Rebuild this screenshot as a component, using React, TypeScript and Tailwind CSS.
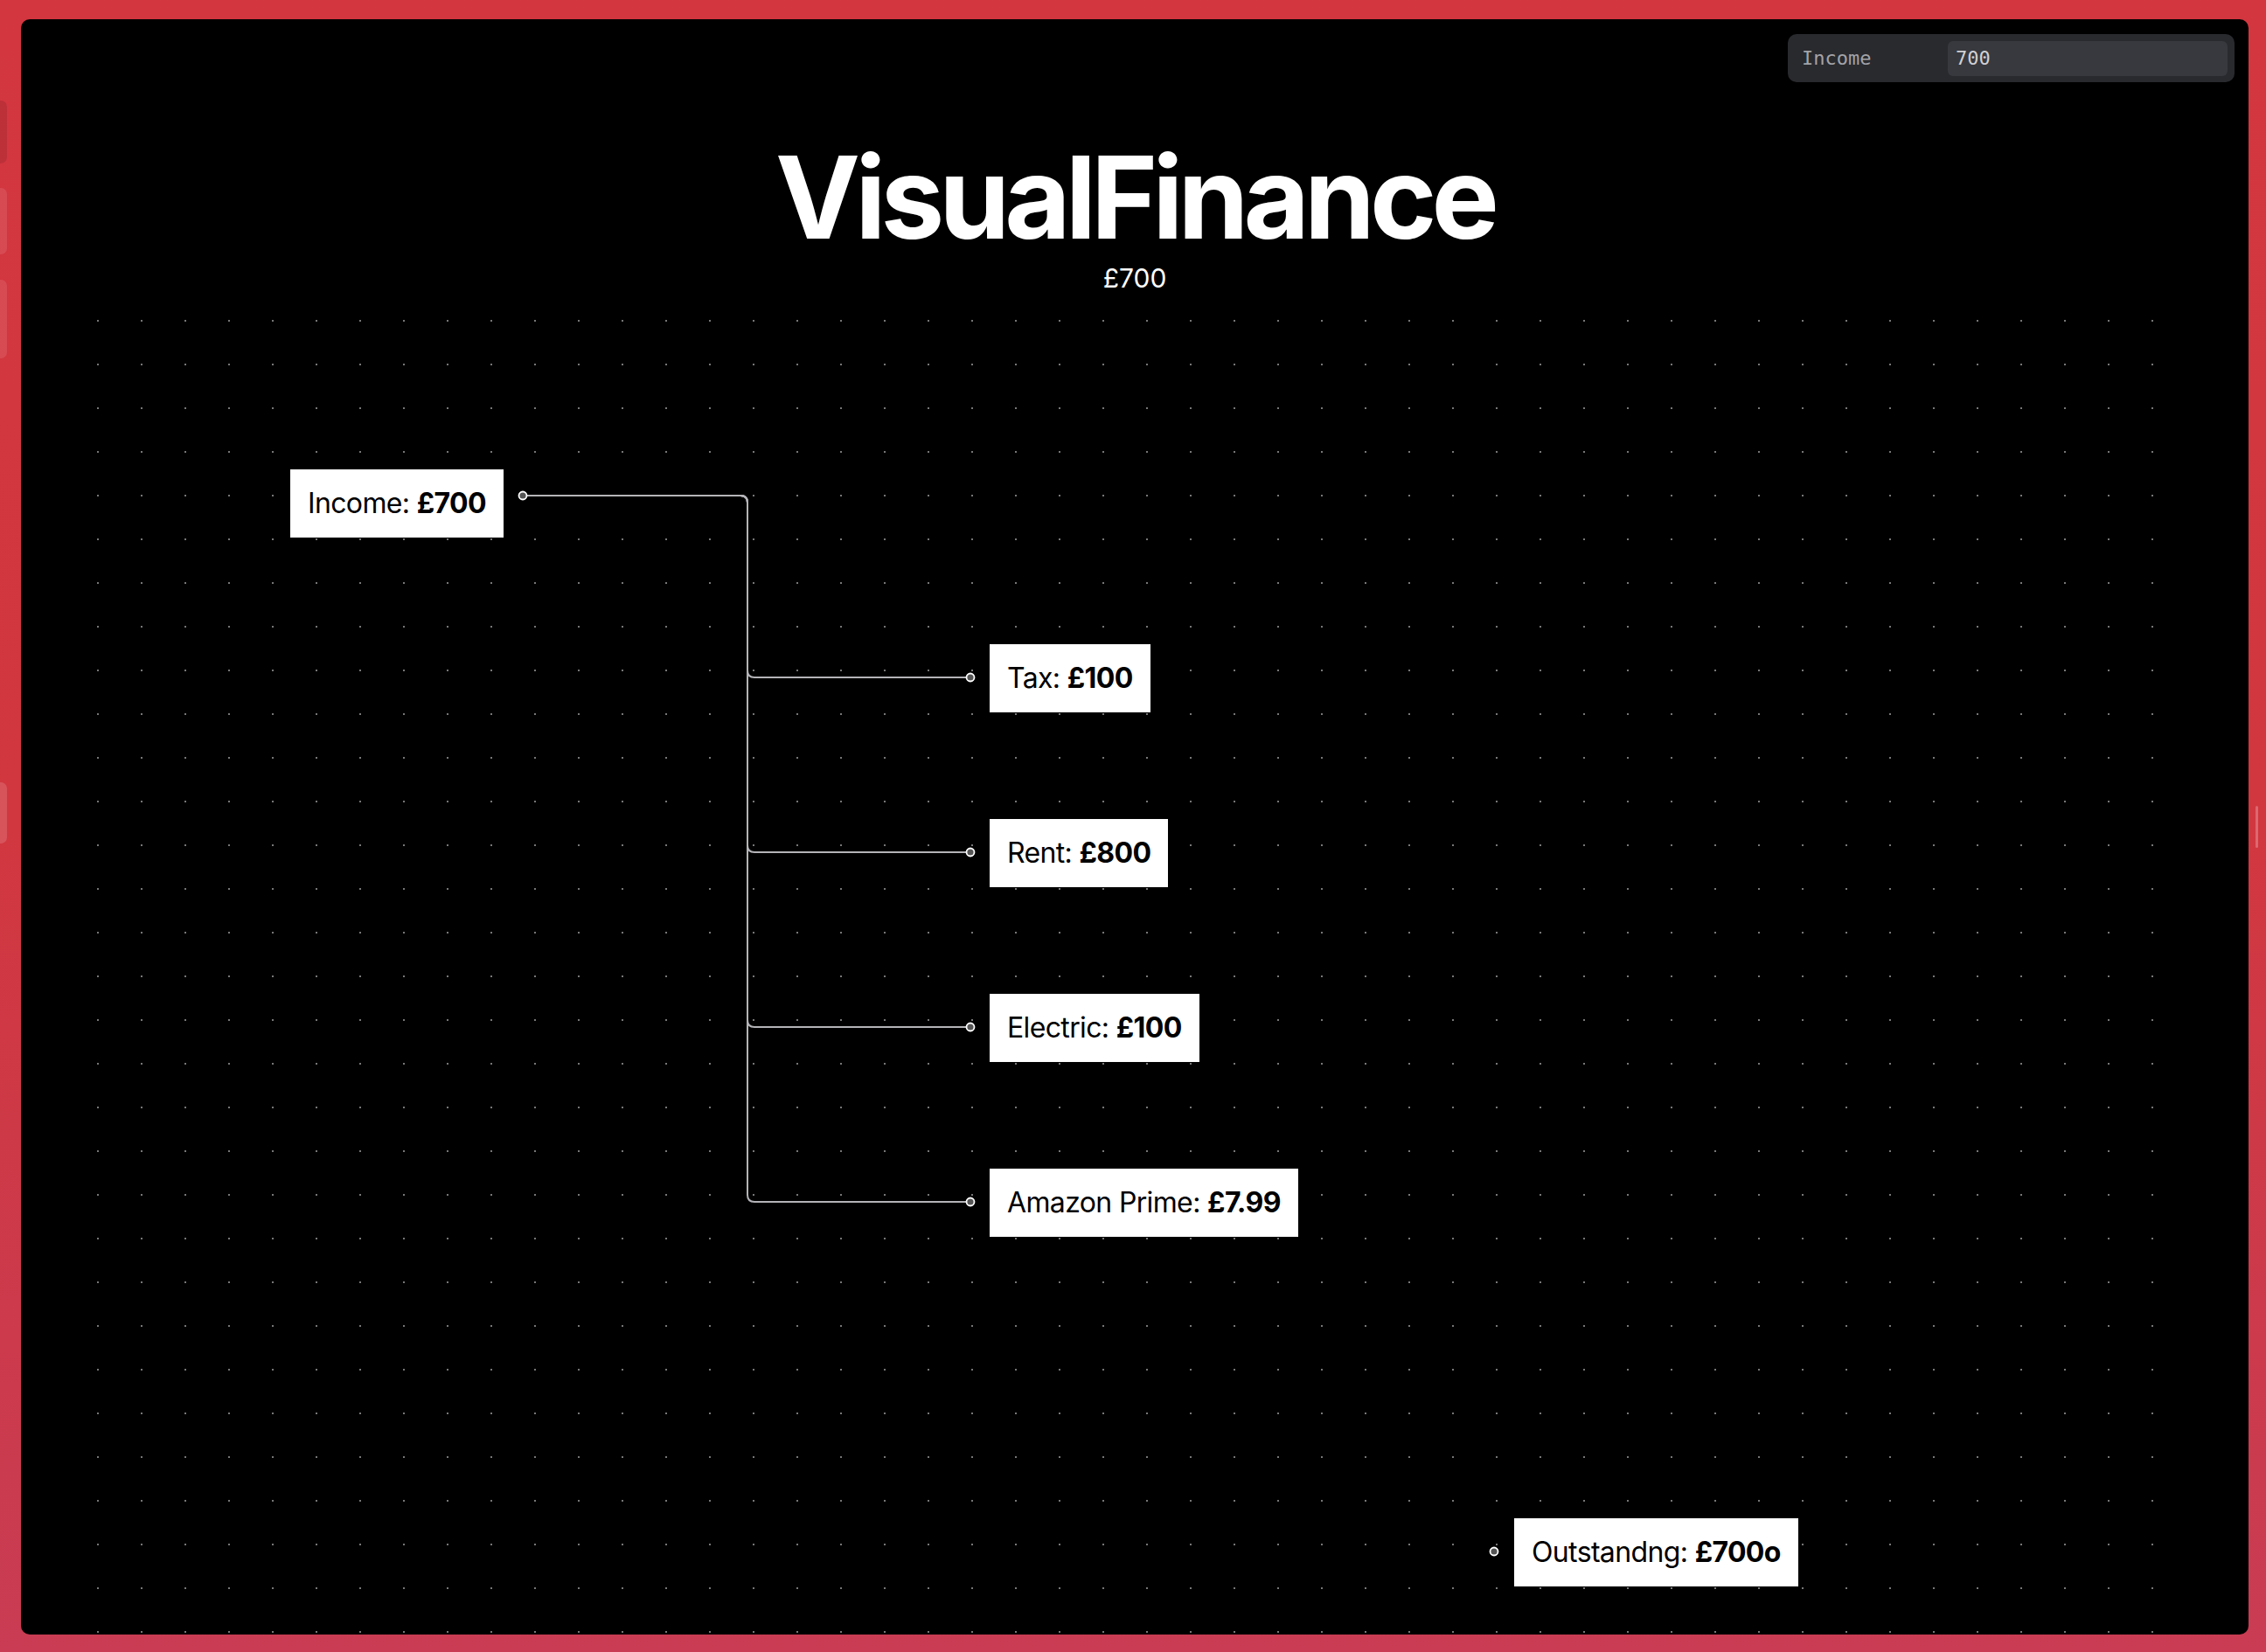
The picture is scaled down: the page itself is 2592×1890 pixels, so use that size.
// App.tsx
// VisualFinance — flow canvas of income and outgoings on a dotted board.
import React from "react";

type Item = { label: string; amount: string; top: number };

const outgoings: Item[] = [
  { label: "Tax", amount: "£100", top: 715 },
  { label: "Rent", amount: "£800", top: 915 },
  { label: "Electric", amount: "£100", top: 1115 },
  { label: "Amazon Prime", amount: "£7.99", top: 1315 },
];

// edge geometry (px, relative to the black board)
const SRC = { x: 574, y: 545 };
const BUS_X = 831;
const TARGET_X = 1086;
const R = 8;

function edgePath(ty: number) {
  return [
    `M${SRC.x},${SRC.y}`,
    `L${BUS_X - R},${SRC.y}`,
    `Q${BUS_X},${SRC.y} ${BUS_X},${SRC.y + R}`,
    `L${BUS_X},${ty - R}`,
    `Q${BUS_X},${ty} ${BUS_X + R},${ty}`,
    `L${TARGET_X},${ty}`,
  ].join(" ");
}

function Handle({ x, y }: { x: number; y: number }) {
  return <circle cx={x} cy={y} r={4.5} fill="#555" stroke="#fff" strokeWidth={1.8} />;
}

function Node({ label, amount, left, top }: { label: string; amount: string; left: number; top: number }) {
  return (
    <div
      className="absolute bg-white px-5 py-5 text-[32px] leading-[38px] tracking-[-0.02em] text-black whitespace-nowrap"
      style={{ left, top, fontFamily: "Inter, 'Noto Sans', sans-serif" }}
    >
      {label}: <span className="font-bold">{amount}</span>
    </div>
  );
}

export default function App() {
  return (
    <div className="relative w-[2592px] h-[1890px] overflow-hidden bg-linear-to-b from-[#d3363f] via-[#d1373f] to-[#c93c53] pt-[22px] pl-[24px] pr-[20px] pb-[20px] flex">
      {/* faint browser-chrome pills on the red frame */}
      <div className="absolute left-[-6px] top-[115px] w-[14px] h-[72px] rounded-full bg-black/10" />
      <div className="absolute left-[-6px] top-[215px] w-[14px] h-[76px] rounded-full bg-white/10" />
      <div className="absolute left-[-6px] top-[320px] w-[14px] h-[90px] rounded-full bg-white/10" />
      <div className="absolute left-[-6px] top-[895px] w-[14px] h-[70px] rounded-full bg-white/15" />
      <div className="absolute left-[2580px] top-[922px] w-[3px] h-[48px] rounded-full bg-white/25" />

      <div className="relative flex-1 bg-black rounded-[10px] overflow-hidden flex flex-col items-center">
        {/* dotted board */}
        <div className="absolute left-[63px] top-[320px] w-[2400px] bottom-0 bg-[radial-gradient(circle,#777_1.1px,transparent_1.3px)] bg-[length:50px_50px] bg-[position:0_0]" />

        {/* header */}
        <div className="relative mt-[139px] flex flex-col items-center text-white" style={{ fontFamily: "Inter, 'Noto Sans', sans-serif" }}>
          <h1 className="text-[130px] leading-none font-bold tracking-[-0.046em]">VisualFinance</h1>
          <p className="mt-[12px] text-[30px] leading-none">£700</p>
        </div>

        {/* edges + handles */}
        <svg className="absolute inset-0 w-full h-full pointer-events-none" width="2548" height="1848">
          {outgoings.map((o) => (
            <path key={o.label} d={edgePath(o.top + 38)} fill="none" stroke="#b4b4b8" strokeWidth={2} />
          ))}
          <Handle x={SRC.x} y={SRC.y} />
          {outgoings.map((o) => (
            <Handle key={o.label} x={TARGET_X} y={o.top + 38} />
          ))}
          <Handle x={1685} y={1753} />
        </svg>

        {/* nodes */}
        <Node label="Income" amount="£700" left={308} top={515} />
        {outgoings.map((o) => (
          <Node key={o.label} label={o.label} amount={o.amount} left={1108} top={o.top} />
        ))}
        <Node label="Outstandng" amount="£700o" left={1708} top={1715} />

        {/* controls panel */}
        <div
          className="absolute top-[17px] right-[16px] w-[511px] h-[55px] rounded-[10px] bg-[#292a2e] flex items-center pl-[16px] pr-[8px] text-[22px]"
          style={{ fontFamily: "'DejaVu Sans Mono', 'Liberation Mono', monospace" }}
        >
          <span className="w-[167px] text-[#a3a3a8]">Income</span>
          <div className="flex-1 h-[40px] rounded-[6px] bg-[#38393e] flex items-center px-[9px] text-[#d0d0d4]">700</div>
        </div>
      </div>
    </div>
  );
}
